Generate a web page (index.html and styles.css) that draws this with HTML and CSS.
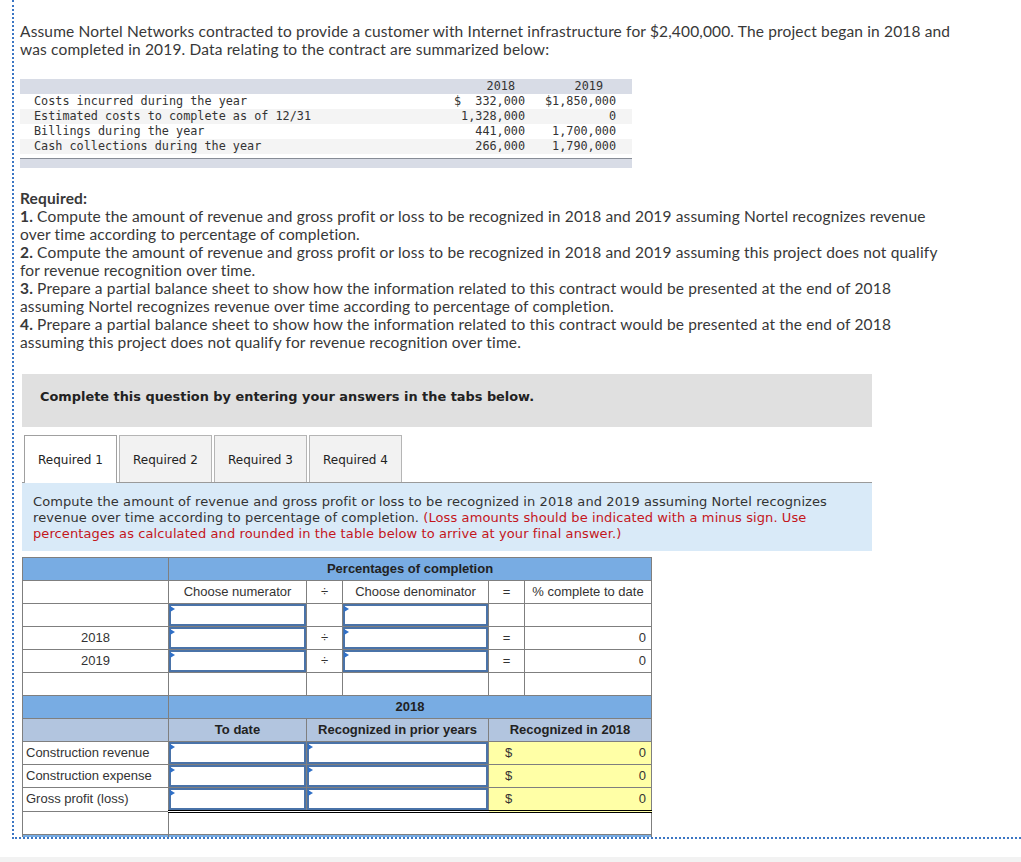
FILE: index.html
```html
<!DOCTYPE html>
<html>
<head>
<meta charset="utf-8">
<title>Nortel Networks</title>
<link rel="stylesheet" href="styles.css">
</head>
<body>
<div class="question">
  <p class="intro">Assume Nortel Networks contracted to provide a customer with Internet infrastructure for $2,400,000. The project began in 2018 and was completed in 2019. Data relating to the contract are summarized below:</p>

  <div class="data">
    <div class="data-row data-head"><span></span><span class="h18">2018</span><span class="h19">2019</span></div>
    <div class="data-row"><span>Costs incurred during the year</span><span>$  332,000</span><span>$1,850,000</span></div>
    <div class="data-row alt"><span>Estimated costs to complete as of 12/31</span><span>1,328,000</span><span>0</span></div>
    <div class="data-row"><span>Billings during the year</span><span>441,000</span><span>1,700,000</span></div>
    <div class="data-row alt"><span>Cash collections during the year</span><span>266,000</span><span>1,790,000</span></div>
    <div class="data-foot"></div>
  </div>

  <div class="required">
    <p><b>Required:</b></p>
    <p><b>1.</b> Compute the amount of revenue and gross profit or loss to be recognized in 2018 and 2019 assuming Nortel recognizes revenue over time according to percentage of completion.</p>
    <p><b>2.</b> Compute the amount of revenue and gross profit or loss to be recognized in 2018 and 2019 assuming this project does not qualify for revenue recognition over time.</p>
    <p><b>3.</b> Prepare a partial balance sheet to show how the information related to this contract would be presented at the end of 2018 assuming Nortel recognizes revenue over time according to percentage of completion.</p>
    <p><b>4.</b> Prepare a partial balance sheet to show how the information related to this contract would be presented at the end of 2018 assuming this project does not qualify for revenue recognition over time.</p>
  </div>

  <div class="instr">Complete this question by entering your answers in the tabs below.</div>

  <div class="tabs">
    <div class="tab active">Required 1</div>
    <div class="tab">Required 2</div>
    <div class="tab">Required 3</div>
    <div class="tab">Required 4</div>
  </div>

  <div class="prompt">Compute the amount of revenue and gross profit or loss to be recognized in 2018 and 2019 assuming Nortel recognizes revenue over time according to percentage of completion. <span class="warn">(Loss amounts should be indicated with a minus sign. Use percentages as calculated and rounded in the table below to arrive at your final answer.)</span></div>

  <table class="grid">
    <colgroup>
      <col class="c1"><col class="c2"><col class="c3"><col class="c4"><col class="c5"><col class="c6">
    </colgroup>
    <tr class="blue"><td></td><td colspan="5" class="b">Percentages of completion</td></tr>
    <tr><td></td><td>Choose numerator</td><td>÷</td><td>Choose denominator</td><td>=</td><td>% complete to date</td></tr>
    <tr><td></td><td class="in"><div class="inp"></div></td><td></td><td class="in"><div class="inp"></div></td><td></td><td></td></tr>
    <tr><td>2018</td><td class="in"><div class="inp"></div></td><td>÷</td><td class="in"><div class="inp"></div></td><td>=</td><td class="num">0</td></tr>
    <tr><td>2019</td><td class="in"><div class="inp"></div></td><td>÷</td><td class="in"><div class="inp"></div></td><td>=</td><td class="num">0</td></tr>
    <tr><td></td><td></td><td></td><td></td><td></td><td></td></tr>
    <tr class="blue"><td></td><td colspan="5" class="b">2018</td></tr>
    <tr class="sub"><td></td><td class="b">To date</td><td colspan="2" class="b">Recognized in prior years</td><td colspan="2" class="b">Recognized in 2018</td></tr>
    <tr><td class="lbl">Construction revenue</td><td class="in"><div class="inp"></div></td><td colspan="2" class="in"><div class="inp"></div></td><td colspan="2" class="yl"><div class="amt"><span>$</span><span>0</span></div></td></tr>
    <tr><td class="lbl">Construction expense</td><td class="in"><div class="inp"></div></td><td colspan="2" class="in"><div class="inp"></div></td><td colspan="2" class="yl"><div class="amt"><span>$</span><span>0</span></div></td></tr>
    <tr class="gp"><td class="lbl">Gross profit (loss)</td><td class="in"><div class="inp"></div></td><td colspan="2" class="in"><div class="inp"></div></td><td colspan="2" class="yl total"><div class="amt"><span>$</span><span>0</span></div></td></tr>
    <tr><td></td><td colspan="5"></td></tr>
    <tr class="blue"><td></td><td colspan="5"></td></tr>
  </table>
</div>
<div class="footer"></div>
</body>
</html>
```

FILE: styles.css
```css
* {
  box-sizing: border-box;
}

html, body {
  margin: 0;
  padding: 0;
  background: #ffffff;
}

.question {
  margin-left: 12px;
  height: 839px;
  overflow: hidden;
  padding: 22px 66px 0 6px;
  border-left: 2px dotted #3b76c4;
  border-bottom: 2px dotted #3b76c4;
  font-family: Lato, "Open Sans", sans-serif;
  font-size: 15.5px;
  letter-spacing: 0.15px;
  line-height: 18px;
  color: #383838;
}

.intro {
  margin: 0;
}

/* data summary */
.data {
  width: 612px;
  margin-top: 21px;
  font-family: "DejaVu Sans Mono", "Liberation Mono", monospace;
  font-size: 11.8px;
  letter-spacing: 0;
  color: #333333;
}

.data-row {
  display: grid;
  grid-template-columns: 1fr 110px 91px;
  height: 15px;
  line-height: 15px;
  padding: 0 16px 0 14px;
  white-space: pre;
}

.data-row span:nth-child(2),
.data-row span:nth-child(3) {
  text-align: right;
}

.data-head {
  background: #d8dce6;
}

.data-head .h18 {
  padding-right: 10px;
}

.data-head .h19 {
  padding-right: 13px;
}

.data-row.alt {
  background: #f4f4f4;
}

.data-foot {
  margin-top: 4px;
  height: 10px;
  background: #d8dce6;
  border-top: 1px solid #878c96;
}

/* required */
.required {
  margin-top: 21px;
}

.required p {
  margin: 0;
}

/* instruction bar */
.instr {
  width: 850px;
  height: 53px;
  margin: 23px 0 0 2px;
  padding: 14px 0 0 18px;
  background: #e0e0e0;
  font-family: "DejaVu Sans", Verdana, sans-serif;
  font-weight: bold;
  font-size: 12.9px;
  letter-spacing: 0;
  line-height: 18px;
  color: #222222;
}

/* tabs */
.tabs {
  display: flex;
  gap: 2px;
  width: 850px;
  height: 48px;
  margin: 8px 0 0 2px;
  padding-left: 2px;
  border-bottom: 1px solid #9a9a9a;
  align-items: flex-start;
  letter-spacing: 0;
}

.tab {
  width: 93px;
  height: 47px;
  display: flex;
  align-items: center;
  justify-content: center;
  padding-top: 2px;
  background: #f2f2f2;
  border: 1px solid #b5b5b5;
  border-bottom: none;
  font-family: "DejaVu Sans", Verdana, sans-serif;
  font-size: 12px;
  color: #222222;
}

.tab.active {
  background: #ffffff;
  height: 48px;
  margin-bottom: -1px;
  padding-top: 1px;
  border-color: #a0a0a0;
}

/* prompt */
.prompt {
  width: 850px;
  margin-left: 2px;
  padding: 11px 9px 9px 11px;
  background: #d9eaf8;
  font-family: "DejaVu Sans", Verdana, sans-serif;
  font-size: 13px;
  letter-spacing: 0.1px;
  line-height: 16px;
  color: #333333;
}

.warn {
  color: #c4161c;
}

/* answer grid */
.grid {
  margin: 6px 0 0 2px;
  border-collapse: collapse;
  table-layout: fixed;
  width: 629px;
  font-family: "Liberation Sans", Arial, sans-serif;
  font-size: 13px;
  letter-spacing: 0;
  color: #333333;
}

.grid col.c1 { width: 146px; }
.grid col.c2 { width: 138px; }
.grid col.c3 { width: 36px; }
.grid col.c4 { width: 146px; }
.grid col.c5 { width: 36px; }
.grid col.c6 { width: 127px; }

.grid tr {
  height: 23px;
}

.grid td {
  border: 1px solid #7f7f7f;
  padding: 0 4px 2px;
  text-align: center;
  vertical-align: middle;
  white-space: nowrap;
  line-height: 15px;
}

.grid td.b {
  font-weight: bold;
  color: #222222;
}

.grid tr.blue td {
  background: #78ace3;
}

.grid tr.sub td {
  background: #b2c5df;
}

.grid td.num {
  text-align: right;
  padding-right: 5px;
}

.grid td.lbl {
  text-align: left;
  padding-left: 3px;
}

.grid td.in {
  padding: 0;
}

.inp {
  position: relative;
  height: 22px;
  border: 2px solid #4a73a8;
  background: #ffffff;
}

.inp::before {
  content: "";
  position: absolute;
  left: -1px;
  top: 0;
  border-left: 5px solid #2f6fc6;
  border-top: 3px solid transparent;
  border-bottom: 3px solid transparent;
}

.grid td.yl {
  background: #ffffa6;
  padding: 0 5px 2px 16px;
}

.amt {
  display: flex;
  justify-content: space-between;
}

.grid tr.gp td + td {
  border-bottom: 3px double #000000;
}

.grid td.yl.total {
  border-top: 1px solid #000000;
}

.footer {
  margin-top: 18px;
  height: 6px;
  background: #f2f2f2;
}
```
